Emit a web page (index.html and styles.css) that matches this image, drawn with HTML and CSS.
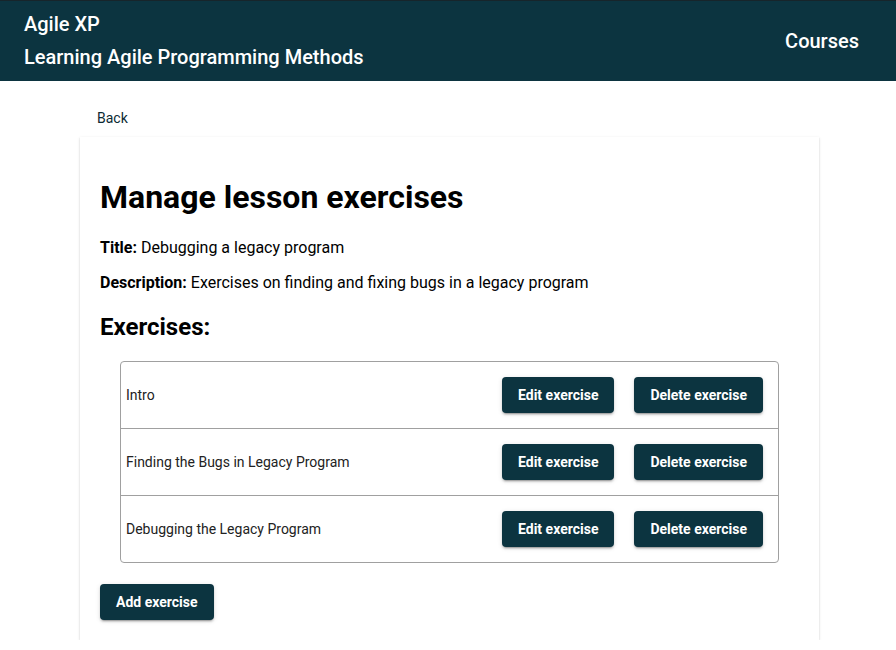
FILE: index.html
```html
<!DOCTYPE html>
<html lang="en">
<head>
<meta charset="utf-8">
<title>Manage lesson exercises</title>
<link rel="stylesheet" href="styles.css">
</head>
<body>
<header class="topbar">
  <div class="brand">
    <div class="brand-name">Agile XP</div>
    <div class="brand-sub">Learning Agile Programming Methods</div>
  </div>
  <a class="nav-link" href="#">Courses</a>
</header>
<main class="container">
  <div class="back-row"><a class="back" href="#">Back</a></div>
  <section class="card">
    <h1 class="page-title">Manage lesson exercises</h1>
    <p class="field"><strong>Title:</strong> Debugging a legacy program</p>
    <p class="field"><strong>Description:</strong> Exercises on finding and fixing bugs in a legacy program</p>
    <h2 class="section-title">Exercises:</h2>
    <ul class="exercise-list">
      <li class="exercise">
        <span class="exercise-name">Intro</span>
        <div class="actions">
          <button class="btn">Edit exercise</button>
          <button class="btn">Delete exercise</button>
        </div>
      </li>
      <li class="exercise">
        <span class="exercise-name">Finding the Bugs in Legacy Program</span>
        <div class="actions">
          <button class="btn">Edit exercise</button>
          <button class="btn">Delete exercise</button>
        </div>
      </li>
      <li class="exercise">
        <span class="exercise-name">Debugging the Legacy Program</span>
        <div class="actions">
          <button class="btn">Edit exercise</button>
          <button class="btn">Delete exercise</button>
        </div>
      </li>
    </ul>
    <button class="btn add-btn">Add exercise</button>
  </section>
</main>
</body>
</html>
```

FILE: styles.css
```css
* { box-sizing: border-box; }
html, body { margin: 0; padding: 0; }
body {
  font-family: Roboto, "Liberation Sans", sans-serif;
  color: #000;
  background: #fff;
}
.topbar {
  height: 81px;
  background: #0c3440;
  border-top: 1px solid #17252b;
  color: #fff;
  display: flex;
  align-items: center;
  justify-content: space-between;
  padding: 0 37px 1px 24px;
}
.brand { display: flex; flex-direction: column; gap: 9px; }
.brand-name, .brand-sub {
  font-size: 20px;
  font-weight: 500;
  line-height: 24px;
}
.nav-link {
  color: #fff;
  text-decoration: none;
  font-size: 20px;
  font-weight: 500;
}
.container {
  width: 739px;
  margin: 0 0 0 80px;
}
.back-row {
  padding: 27px 0 0 17px;
  height: 56px;
}
.back {
  color: #0c2a33;
  font-size: 14px;
  text-decoration: none;
}
.card {
  background: #fff;
  box-shadow: 0 2px 1px -1px rgba(0,0,0,0.25), 0 1px 1px 0 rgba(0,0,0,0.16), 0 1px 3px 0 rgba(0,0,0,0.12);
  padding: 20px 20px 20px;
}
.page-title {
  font-size: 32px;
  font-weight: 700;
  margin: 21px 0 22px;
}
.field {
  font-size: 16px;
  margin: 16px 0;
}
.field strong { font-weight: 700; }
.section-title {
  font-size: 24px;
  font-weight: 700;
  margin: 21px 0 20px;
}
.exercise-list {
  list-style: none;
  margin: 0 20px;
  padding: 0;
  border: 1px solid #a0a0a0;
  border-radius: 4px;
}
.exercise {
  height: 67px;
  display: flex;
  align-items: center;
  justify-content: space-between;
  padding: 0 15px 0 5px;
  border-top: 1px solid #a0a0a0;
}
.exercise:first-child { border-top: none; height: 66px; }
.exercise-name {
  font-size: 14px;
  color: #222;
}
.actions { display: flex; gap: 20px; }
.btn {
  background: #0c3440;
  color: #fff;
  border: none;
  border-radius: 4px;
  font-family: Roboto, "Liberation Sans", sans-serif;
  font-size: 14px;
  font-weight: 700;
  height: 36px;
  padding: 0 16px;
  box-shadow: 0 3px 1px -2px rgba(0,0,0,0.2), 0 2px 2px 0 rgba(0,0,0,0.14), 0 1px 5px 0 rgba(0,0,0,0.12);
  cursor: pointer;
}
.add-btn { margin-top: 21px; }
```
